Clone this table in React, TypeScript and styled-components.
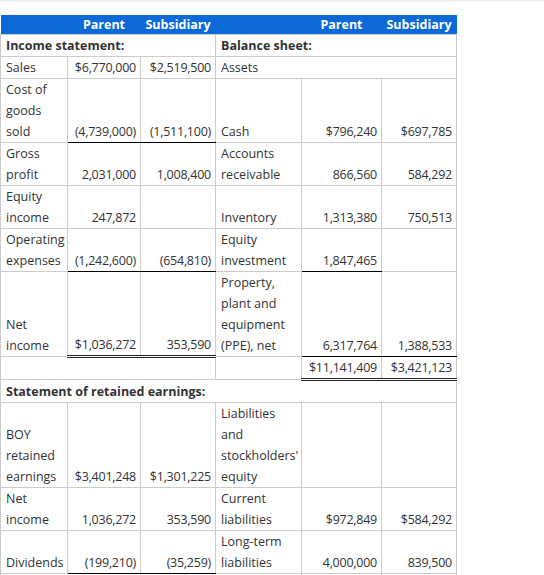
import React from 'react'
import styled, { createGlobalStyle } from 'styled-components'

const GlobalStyle = createGlobalStyle`
    html, body {
        margin: 0;
        padding: 0;
        background: #ffffff;
    }
    body {
        font-family: 'Open Sans', 'DejaVu Sans', sans-serif;
        color: #333333;
    }
`

const Page = styled.div`
    width: 544px;
    height: 575px;
    overflow: hidden;
    border-top: 2px solid #f3f3f3;
    padding-top: 13px;
    box-sizing: border-box;
`

const Sheet = styled.table`
    width: 456px;
    table-layout: fixed;
    border-collapse: collapse;
    font-size: 12.5px;
    line-height: 21px;
`

const HeadRow = styled.tr`
    background: #0b69d8;
`

const HeadCell = styled.th`
    height: 19px;
    padding: 0;
    line-height: 19px;
    color: #ffffff;
    font-weight: 700;
    font-size: 12.5px;
    text-align: center;
    border: none;
`

const Cell = styled.td<{ $num?: boolean; $rule?: 'single' | 'double' }>`
    padding: 0 ${(p) => (p.$num ? '4px' : '5px')} 0 5px;
    border: 1px solid #cccccc;
    vertical-align: bottom;
    text-align: ${(p) => (p.$num ? 'right' : 'left')};
    white-space: ${(p) => (p.$num ? 'nowrap' : 'normal')};
    letter-spacing: ${(p) => (p.$num ? '-0.25px' : 'normal')};
    ${(p) => p.$rule === 'single' && 'border-bottom: 1px solid #000000;'}
    ${(p) => p.$rule === 'double' && 'border-bottom: 3px double #222222;'}
`

const Section = styled(Cell)`
    font-weight: 700;
    letter-spacing: normal;
`

type Rule = 'single' | 'double' | undefined

type Line = {
    label: string
    parent: string
    sub: string
    pRule?: Rule
    sRule?: Rule
    right: string
    rParent: string
    rSub: string
    rpRule?: Rule
    rsRule?: Rule
}

const lines: Line[] = [
    {
        label: 'Cost of goods sold',
        parent: '(4,739,000)',
        sub: '(1,511,100)',
        pRule: 'single',
        sRule: 'single',
        right: 'Cash',
        rParent: '$796,240',
        rSub: '$697,785',
    },
    {
        label: 'Gross profit',
        parent: '2,031,000',
        sub: '1,008,400',
        right: 'Accounts receivable',
        rParent: '866,560',
        rSub: '584,292',
    },
    {
        label: 'Equity income',
        parent: '247,872',
        sub: '',
        right: 'Inventory',
        rParent: '1,313,380',
        rSub: '750,513',
    },
    {
        label: 'Operating expenses',
        parent: '(1,242,600)',
        sub: '(654,810)',
        pRule: 'single',
        sRule: 'single',
        right: 'Equity investment',
        rParent: '1,847,465',
        rSub: '',
        rpRule: 'single',
    },
    {
        label: 'Net income',
        parent: '$1,036,272',
        sub: '353,590',
        pRule: 'double',
        sRule: 'double',
        right: 'Property, plant and equipment (PPE), net',
        rParent: '6,317,764',
        rSub: '1,388,533',
        rpRule: 'single',
        rsRule: 'single',
    },
]

const retained: Line[] = [
    {
        label: 'BOY retained earnings',
        parent: '$3,401,248',
        sub: '$1,301,225',
        right: "Liabilities and stockholders' equity",
        rParent: '',
        rSub: '',
    },
    {
        label: 'Net income',
        parent: '1,036,272',
        sub: '353,590',
        right: 'Current liabilities',
        rParent: '$972,849',
        rSub: '$584,292',
    },
    {
        label: 'Dividends',
        parent: '(199,210)',
        sub: '(35,259)',
        pRule: 'single',
        sRule: 'single',
        right: 'Long-term liabilities',
        rParent: '4,000,000',
        rSub: '839,500',
    },
]

function LineRow({ line }: { line: Line }) {
    return (
        <tr>
            <Cell>{line.label}</Cell>
            <Cell $num $rule={line.pRule}>
                {line.parent}
            </Cell>
            <Cell $num $rule={line.sRule}>
                {line.sub}
            </Cell>
            <Cell>{line.right}</Cell>
            <Cell $num $rule={line.rpRule}>
                {line.rParent}
            </Cell>
            <Cell $num $rule={line.rsRule}>
                {line.rSub}
            </Cell>
        </tr>
    )
}

export default function App() {
    return (
        <Page>
            <GlobalStyle />
            <Sheet>
                <colgroup>
                    <col style={{ width: 67 }} />
                    <col style={{ width: 73 }} />
                    <col style={{ width: 75 }} />
                    <col style={{ width: 86 }} />
                    <col style={{ width: 80 }} />
                    <col style={{ width: 75 }} />
                </colgroup>
                <thead>
                    <HeadRow>
                        <HeadCell />
                        <HeadCell>Parent</HeadCell>
                        <HeadCell>Subsidiary</HeadCell>
                        <HeadCell />
                        <HeadCell>Parent</HeadCell>
                        <HeadCell>Subsidiary</HeadCell>
                    </HeadRow>
                </thead>
                <tbody>
                    <tr>
                        <Section colSpan={3}>Income statement:</Section>
                        <Section colSpan={3}>Balance sheet:</Section>
                    </tr>
                    <tr>
                        <Cell>Sales</Cell>
                        <Cell $num>$6,770,000</Cell>
                        <Cell $num>$2,519,500</Cell>
                        <Cell colSpan={3}>Assets</Cell>
                    </tr>
                    {lines.map((line) => (
                        <LineRow key={line.label} line={line} />
                    ))}
                    <tr>
                        <Cell colSpan={3} />
                        <Cell />
                        <Cell $num $rule="double">
                            $11,141,409
                        </Cell>
                        <Cell $num $rule="double">
                            $3,421,123
                        </Cell>
                    </tr>
                    <tr>
                        <Section colSpan={6}>
                            Statement of retained earnings:
                        </Section>
                    </tr>
                    {retained.map((line) => (
                        <LineRow key={line.label} line={line} />
                    ))}
                    <tr>
                        <Cell>&nbsp;</Cell>
                        <Cell $num />
                        <Cell $num />
                        <Cell />
                        <Cell $num />
                        <Cell $num />
                    </tr>
                </tbody>
            </Sheet>
        </Page>
    )
}
